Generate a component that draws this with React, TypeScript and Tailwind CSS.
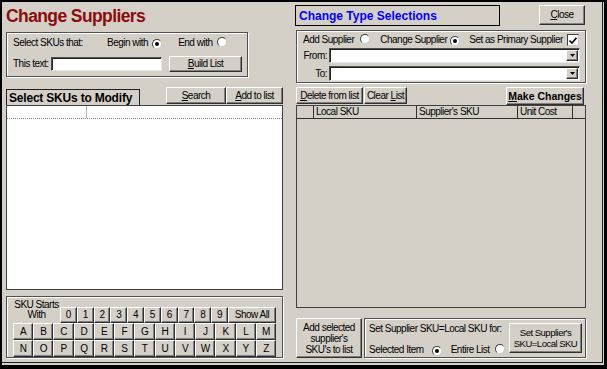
import React from "react";

const raised =
  "bg-[#d4d0c8] border border-t-white border-l-white border-r-[#303030] border-b-[#303030] shadow-[inset_-1px_-1px_0_#808080]";
const etched = "border border-[#505050] shadow-[inset_1px_1px_0_#fff,1px_1px_0_#fff]";
const sunken =
  "bg-white border border-t-[#505050] border-l-[#505050] border-r-[#e8e8e8] border-b-[#e8e8e8] shadow-[inset_1px_1px_0_#202020]";

function Btn({ children, className = "" }: { children: React.ReactNode; className?: string }) {
  return (
    <button type="button" className={`${raised} flex items-center justify-center text-center shrink-0 ${className}`}>
      {children}
    </button>
  );
}

function Radio({ checked }: { checked?: boolean }) {
  return (
    <span className="inline-flex w-[10px] h-[10px] shrink-0 items-center justify-center rounded-full bg-white border border-t-[#404040] border-l-[#404040] border-r-[#c8c8c8] border-b-[#c8c8c8]">
      {checked && <span className="w-[4px] h-[4px] rounded-full bg-black" />}
    </span>
  );
}

function Combo() {
  return (
    <div className={`${sunken} flex-1 h-[15px] flex justify-end p-px`}>
      <div className={`${raised} w-[12px] h-full flex items-center justify-center`}>
        <svg width="5" height="3" viewBox="0 0 5 3">
          <path d="M0 0h5L2.5 3z" fill="#000" />
        </svg>
      </div>
    </div>
  );
}

const numbers = ["0", "1", "2", "3", "4", "5", "6", "7", "8", "9"];
const row1 = ["A", "B", "C", "D", "E", "F", "G", "H", "I", "J", "K", "L", "M"];
const row2 = ["N", "O", "P", "Q", "R", "S", "T", "U", "V", "W", "X", "Y", "Z"];

export default function App() {
  return (
    <div className="w-[607px] h-[369px] bg-black pl-[2px] pt-[2px] pr-[3px] pb-[4px] font-['Liberation_Sans',Arial,sans-serif] text-[10px] tracking-[-0.5px] leading-none text-black">
      <div className="w-full h-full bg-[#d4d0c8] pr-px pb-[2px]">
        <div className="w-full h-full border-r border-b border-[#202020] flex gap-[13px] pl-[4px] pt-[3px]">
          {/* left column */}
          <div className="w-[277px] h-[353px] flex flex-col">
            <div className="h-[24px] flex items-center text-[17.5px] font-bold tracking-[-0.6px] text-[#8b0c0c]">
              Change Suppliers
            </div>

            <div className={`${etched} mt-[3px] w-[242px] h-[45px] pl-[6px] pt-[5px]`}>
              <div className="h-[10px] flex items-center">
                <span className="w-[94px]">Select SKUs that:</span>
                <span>Begin with</span>
                <span className="ml-[4px]"><Radio checked /></span>
                <span className="ml-[16px]">End with</span>
                <span className="ml-[4px]"><Radio /></span>
              </div>
              <div className="mt-[8px] h-[16px] flex items-center">
                <span className="w-[38px]">This text:</span>
                <div className={`${sunken} w-[111px] h-[14px]`} />
                <Btn className="ml-[7px] w-[73px] h-[16px]">
                  <span><span className="underline">B</span>uild List</span>
                </Btn>
              </div>
            </div>

            <div className="mt-[10px] h-[18px] flex items-start">
              <div className="self-end w-[134px] h-[16px] border border-b-0 border-[#202020] flex items-center pl-[2px] text-[12px] font-bold tracking-[-0.2px]">
                Select SKUs to Modify
              </div>
              <Btn className="ml-auto w-[60px] h-[17px]">
                <span><span className="underline">S</span>earch</span>
              </Btn>
              <Btn className="w-[57px] h-[17px]">
                <span><span className="underline">A</span>dd to list</span>
              </Btn>
            </div>

            <div className="flex-1 bg-white border border-[#404040]">
              <div className="h-[13px] flex border-b border-dotted border-[#808080]">
                <div className="w-[80px] border-r border-[#b0b0b0]" />
              </div>
            </div>

            <div className={`${etched} mt-[6px] h-[62px] pl-[6px] pt-px`}>
              <div className="h-[25px] flex items-end">
                <div className="w-[47px] h-[24px] flex flex-col items-center leading-[10px] pt-px">
                  <span>SKU Starts</span>
                  <span>With</span>
                </div>
                <div className="w-[168px] h-[16px] flex">
                  {numbers.map((n) => (
                    <Btn key={n} className="flex-1 h-full">{n}</Btn>
                  ))}
                </div>
                <Btn className="w-[48px] h-[16px]">Show All</Btn>
              </div>
              {[row1, row2].map((row, i) => (
                <div key={i} className="w-[263px] h-[17px] flex">
                  {row.map((l) => (
                    <Btn key={l} className="flex-1 h-full">{l}</Btn>
                  ))}
                </div>
              ))}
            </div>
          </div>

          {/* right column */}
          <div className="w-[290px] h-[353px] flex flex-col">
            <div className="h-[21px] flex items-start">
              <div className="w-[205px] h-[21px] -ml-px border border-black flex items-center pl-[3px] text-[12px] font-bold tracking-[0px] text-[#0000ff]">
                Change Type Selections
              </div>
              <Btn className="ml-auto mr-px w-[46px] h-[20px]">
                <span><span className="underline">C</span>lose</span>
              </Btn>
            </div>

            <div className={`${etched} mt-[4px] h-[53px] pt-[3px]`}>
              <div className="h-[12px] flex items-center pl-[6px]">
                <span>Add Supplier</span>
                <span className="ml-[6px]"><Radio /></span>
                <span className="ml-[10px]">Change Supplier</span>
                <span className="ml-[3px]"><Radio checked /></span>
                <span className="ml-[9px]">Set as Primary Supplier</span>
                <span className="ml-[4px] w-[12px] h-[12px] bg-white border border-t-[#404040] border-l-[#404040] border-r-[#c8c8c8] border-b-[#c8c8c8] flex items-center justify-center">
                  <svg width="8" height="7" viewBox="0 0 8 7">
                    <path d="M0.5 3.5L3 6L7.5 0.8" fill="none" stroke="#000" strokeWidth="1.6" />
                  </svg>
                </span>
              </div>
              <div className="mt-[2px] h-[15px] flex items-center pl-[6px] pr-[5px]">
                <span className="w-[24px] text-right">From:</span>
                <span className="ml-[2px] flex-1 flex"><Combo /></span>
              </div>
              <div className="mt-[3px] h-[15px] flex items-center pl-[6px] pr-[5px]">
                <span className="w-[24px] text-right">To:</span>
                <span className="ml-[2px] flex-1 flex"><Combo /></span>
              </div>
            </div>

            <div className="mt-[4px] h-[18px] flex items-start">
              <Btn className="w-[67px] h-[17px]">
                <span><span className="underline">D</span>elete from list</span>
              </Btn>
              <Btn className="ml-px w-[43px] h-[17px]">
                <span>Clear <span className="underline">L</span>ist</span>
              </Btn>
              <Btn className="ml-auto mr-[2px] w-[78px] h-[18px] text-[10.5px] font-bold tracking-[0px]">
                <span><span className="underline">M</span>ake Changes</span>
              </Btn>
            </div>

            <div className="flex-1 border border-[#404040]">
              <div className="h-[13px] flex">
                <div className="w-[17px] border-r border-b border-[#303030]" />
                <div className="w-[103px] border-r border-b border-[#303030] flex items-center pl-[2px]">Local SKU</div>
                <div className="w-[101px] border-r border-b border-[#303030] flex items-center pl-[2px]">Supplier's SKU</div>
                <div className="w-[55px] border-r border-b border-[#303030] flex items-center pl-[2px]">Unit Cost</div>
                <div className="flex-1 border-b border-[#303030]" />
              </div>
            </div>

            <div className="mt-[10px] h-[40px] flex">
              <Btn className="w-[66px] h-full leading-[11px]">
                <span>Add selected<br />supplier's<br />SKU's to list</span>
              </Btn>
              <div className={`${etched} ml-[2px] flex-1 h-full flex items-center pl-[4px] pr-[3px]`}>
                <div className="flex-1 h-full flex flex-col pt-[5px] pb-[2px]">
                  <div className="h-[10px] flex items-center">Set Supplier SKU=Local SKU for:</div>
                  <div className="mt-auto h-[10px] flex items-center">
                    <span>Selected Item</span>
                    <span className="ml-[8px]"><Radio checked /></span>
                    <span className="ml-[9px]">Entire List</span>
                    <span className="ml-[5px]"><Radio /></span>
                  </div>
                </div>
                <Btn className="w-[73px] h-[30px] leading-[11px] text-[9.5px]">
                  <span>Set Supplier's<br />SKU=Local SKU</span>
                </Btn>
              </div>
            </div>
          </div>
        </div>
      </div>
    </div>
  );
}
